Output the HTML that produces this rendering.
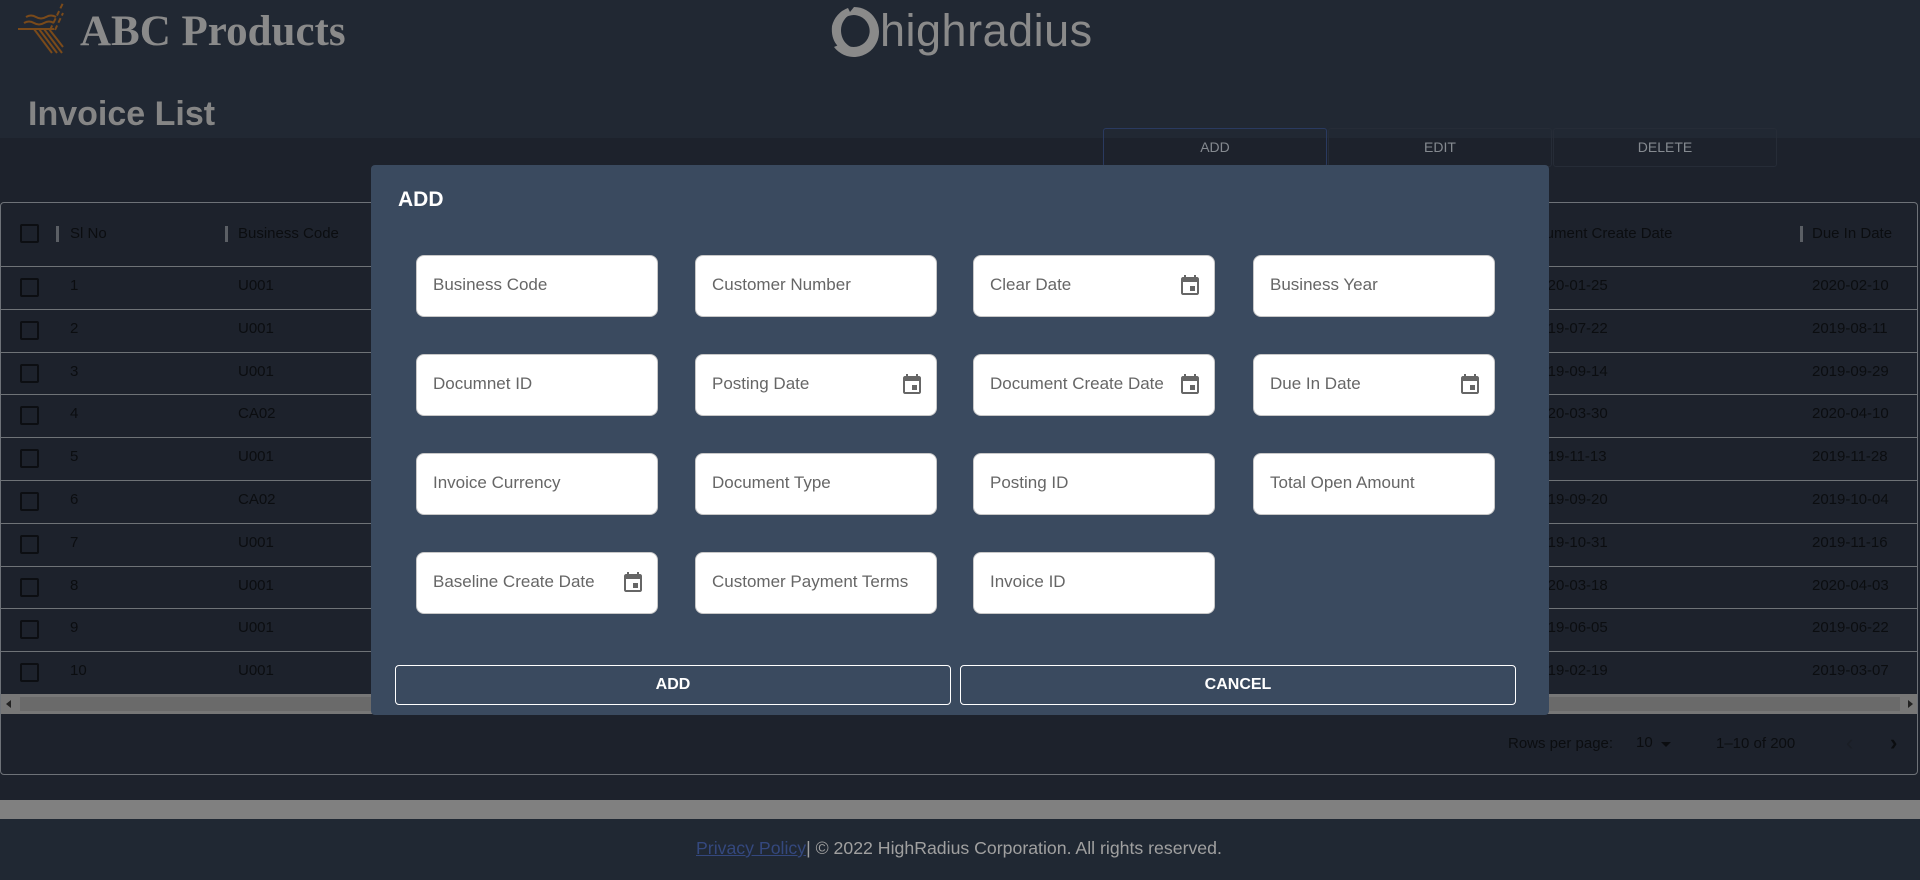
<!DOCTYPE html>
<html><head><meta charset="utf-8"><style>
*{margin:0;padding:0;box-sizing:border-box}
body{width:1920px;height:880px;overflow:hidden;background:#1d222c;font-family:"Liberation Sans",sans-serif;position:relative}
.abs{position:absolute}
.top{left:0;top:0;width:1920px;height:138px;background:#212833}
.btn{top:128px;height:39px;width:224px;border:1px solid #262c37;border-radius:3px;color:#858a90;font-size:14px;text-align:center;line-height:37px}
.table{left:0;top:202px;width:1918px;height:573px;border:1px solid #6e7278;border-radius:4px}
.hline{left:1px;width:1916px;height:1px;background:#6f7377}
.cb{width:19px;height:19px;border:2px solid #0c0e12;border-radius:2px;left:20px}
.t{color:#0b0d10;font-size:15px;white-space:nowrap}
.sep{width:3px;height:16px;background:#5b5f65}
.modal{left:371px;top:165px;width:1178px;height:550px;background:#3a4a5f;border-radius:4px}
.f{width:242px;height:62px;background:#fff;border-radius:8px;border:1px solid #c8c8c8;color:#666;font-size:17px;line-height:58px;padding-left:16px;white-space:nowrap}
.f svg{position:absolute;right:12px;top:18px}
.mb{top:500px;height:40px;width:556px;border:1px solid #fff;border-radius:4px;color:#fff;font-weight:bold;font-size:16px;text-align:center;line-height:38px}
</style></head><body>
<div class="abs top"></div>
<svg class="abs" style="left:16px;top:2px" width="54" height="56" viewBox="16 2 54 56" fill="none" stroke="#7a4a1a" stroke-width="2">
<path d="M26 17q5-3 10 0t10 0t10 0"/><path d="M24 23q5-3 10 0t10 0t10 0"/><path d="M18 29h36"/>
<path d="M34 29l18 24M39 29l18 24M44 29l18 24M49 29l14 18"/>
<path d="M50 30l13-27M55 30l8-17" stroke-dasharray="5 3"/>
</svg>
<div class="abs" style="left:80px;top:7px;font-family:'Liberation Serif',serif;font-weight:bold;font-size:43px;color:#8a8a8a">ABC Products</div>
<svg class="abs" style="left:826px;top:4px" width="56" height="56" viewBox="0 0 56 56">
<path d="M28 3a25 25 0 1 1-20 40l9-4a16 16 0 1 0 3-26z" fill="#8a8a8a"/>
<path d="M6 22a25 25 0 0 1 16-18l3 6a18 18 0 0 0-10 16c0 10 6 17 16 19-12 6-27-3-25-23z" fill="#8a8a8a"/>
</svg>
<div class="abs" style="left:880px;top:5px;font-size:45px;color:#8a8a8a;letter-spacing:0.5px">highradius</div>
<div class="abs" style="left:28px;top:95px;font-size:34px;font-weight:bold;color:#858585">Invoice List</div>
<div class="abs btn" style="left:1103px;border-color:#2a3a60">ADD</div>
<div class="abs btn" style="left:1328px">EDIT</div>
<div class="abs btn" style="left:1553px">DELETE</div>

<div class="abs table"></div>
<div class="abs cb" style="top:224px"></div>
<div class="abs sep" style="left:56px;top:226px"></div>
<div class="abs t" style="left:70px;top:225px">Sl No</div>
<div class="abs sep" style="left:225px;top:226px"></div>
<div class="abs t" style="left:238px;top:225px">Business Code</div>
<div class="abs t" style="left:1519px;top:225px">Document Create Date</div>
<div class="abs sep" style="left:1800px;top:226px"></div>
<div class="abs t" style="left:1812px;top:225px">Due In Date</div>
<div class="abs hline" style="top:266px"></div>

<div id="rows"></div>
<script>
var d=[["U001","2020-01-25","2020-02-10"],["U001","2019-07-22","2019-08-11"],["U001","2019-09-14","2019-09-29"],["CA02","2020-03-30","2020-04-10"],["U001","2019-11-13","2019-11-28"],["CA02","2019-09-20","2019-10-04"],["U001","2019-10-31","2019-11-16"],["U001","2020-03-18","2020-04-03"],["U001","2019-06-05","2019-06-22"],["U001","2019-02-19","2019-03-07"]];
var h="";
for(var i=0;i<10;i++){var y=266+i*42.8;
h+='<div class="abs cb" style="top:'+(y+12)+'px"></div><div class="abs t" style="left:70px;top:'+(y+11)+'px">'+(i+1)+'</div><div class="abs t" style="left:238px;top:'+(y+11)+'px">'+d[i][0]+'</div><div class="abs t" style="left:1531px;top:'+(y+11)+'px">'+d[i][1]+'</div><div class="abs t" style="left:1812px;top:'+(y+11)+'px">'+d[i][2]+'</div>';
if(i<9)h+='<div class="abs hline" style="top:'+(y+42.8)+'px"></div>';}
document.getElementById("rows").innerHTML=h;
</script>
<div class="abs" style="left:1px;top:694px;width:1916px;height:20px;background:#777"></div>
<div class="abs" style="left:20px;top:697px;width:1880px;height:14px;background:#6a6a6a"></div>
<div class="abs" style="left:6px;top:700px;width:0;height:0;border:4px solid transparent;border-right:5px solid #222;border-left:0"></div>
<div class="abs" style="left:1908px;top:700px;width:0;height:0;border:4px solid transparent;border-left:5px solid #222;border-right:0"></div>
<div class="abs t" style="left:1508px;top:735px;font-size:15px">Rows per page:</div>
<div class="abs t" style="left:1636px;top:734px;font-size:15px">10</div>
<div class="abs" style="left:1661px;top:742px;width:0;height:0;border:5px solid transparent;border-top:5px solid #0b0d10"></div>
<div class="abs t" style="left:1716px;top:735px;font-size:15px">1–10 of 200</div>
<div class="abs t" style="left:1846px;top:730px;font-size:22px;color:#1a1e25">‹</div>
<div class="abs t" style="left:1890px;top:730px;font-size:22px;font-weight:bold">›</div>

<div class="abs" style="left:0;top:800px;width:1920px;height:19px;background:#808080"></div>
<div class="abs" style="left:0;top:819px;width:1920px;height:61px;background:#202833"></div>
<div class="abs" style="left:696px;top:838px;font-size:17.7px;color:#a0a0a0;white-space:nowrap"><span style="color:#34487e;text-decoration:underline">Privacy Policy</span>| © 2022 HighRadius Corporation. All rights reserved.</div>

<div class="abs modal">
<div class="abs" style="left:27px;top:23px;color:#fff;font-weight:bold;font-size:21px">ADD</div>
<div id="fields"></div>
<div class="abs mb" style="left:24px">ADD</div>
<div class="abs mb" style="left:589px">CANCEL</div>
</div>
<script>
var cal='<svg width="24" height="24" viewBox="0 0 24 24"><path fill="#666" d="M17 12h-5v5h5v-5zM16 1v2H8V1H6v2H5c-1.1 0-2 .9-2 2v14c0 1.1.9 2 2 2h14c1.1 0 2-.9 2-2V5c0-1.1-.9-2-2-2h-1V1h-2zm3 18H5V8h14v11z"/></svg>';
var f=[["Business Code",0],["Customer Number",0],["Clear Date",1],["Business Year",0],["Documnet ID",0],["Posting Date",1],["Document Create Date",1],["Due In Date",1],["Invoice Currency",0],["Document Type",0],["Posting ID",0],["Total Open Amount",0],["Baseline Create Date",1],["Customer Payment Terms",0],["Invoice ID",0]];
var xs=[45,324,602,882],g="";
for(var i=0;i<f.length;i++){var c=i%4,r=Math.floor(i/4);
g+='<div class="abs f" style="left:'+xs[c]+'px;top:'+(90+r*99)+'px;overflow:hidden">'+f[i][0]+(f[i][1]?cal:'')+'</div>';}
document.getElementById("fields").innerHTML=g;
</script>
</body></html>
